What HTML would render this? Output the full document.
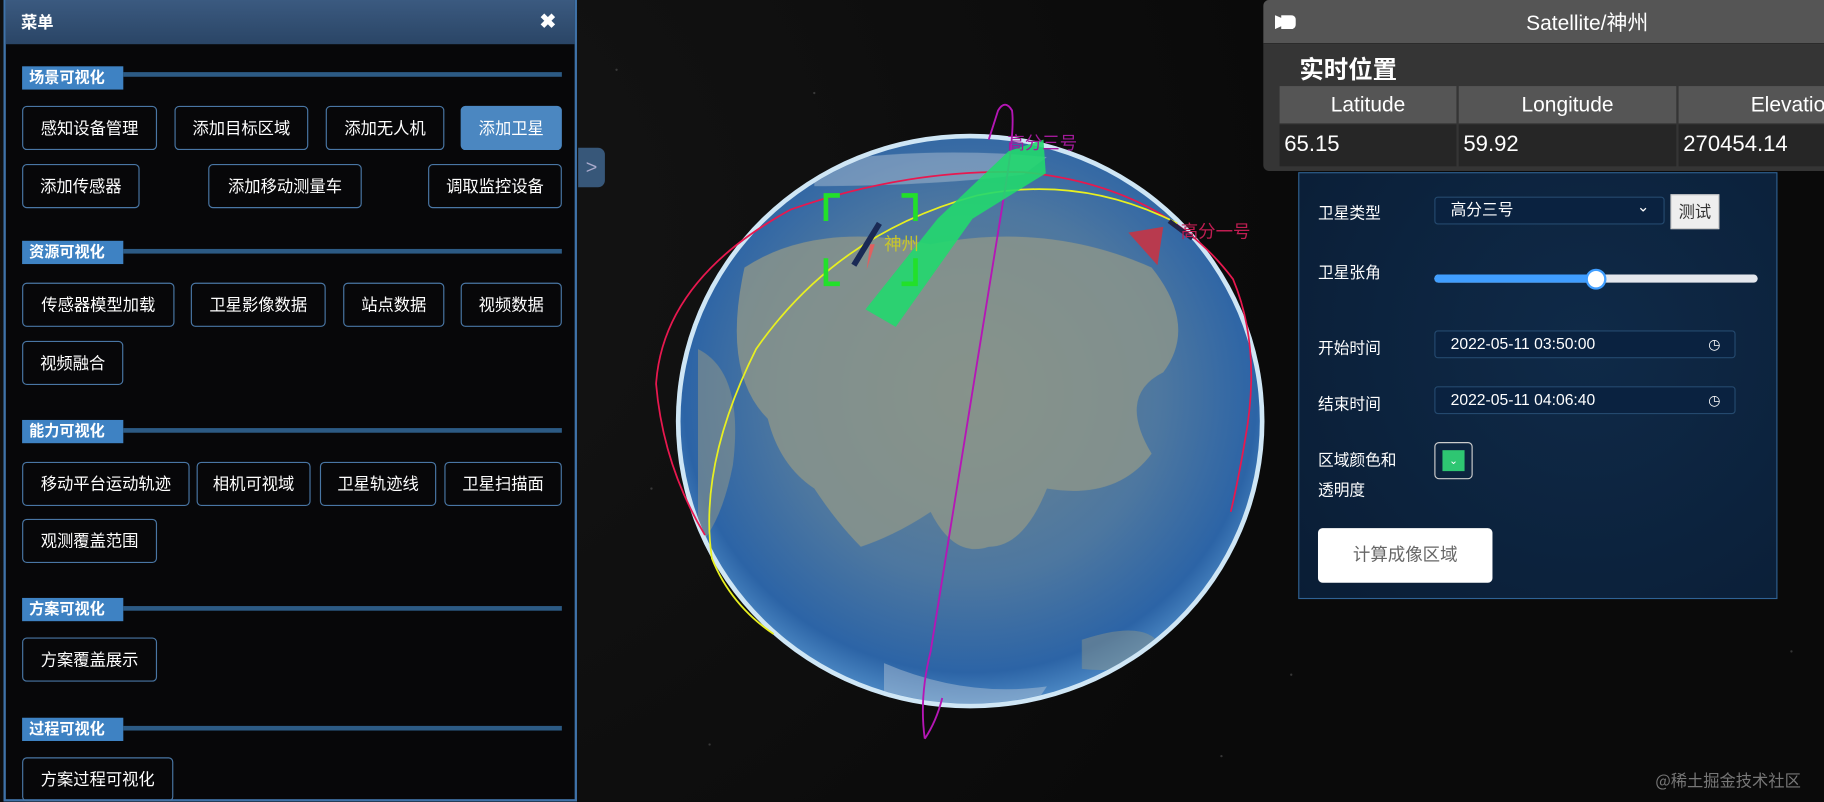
<!DOCTYPE html>
<html><head><meta charset="utf-8"><style>
*{margin:0;padding:0;box-sizing:border-box}
html,body{width:1824px;height:802px;overflow:hidden;background:#0b0b0b}
#s{position:absolute;left:0;top:0;width:1568px;height:689px;transform:scale(1.16327);transform-origin:0 0;font-family:"Liberation Sans","Noto Sans CJK SC",sans-serif;color:#fff;
background:radial-gradient(circle at 20% 30%,#151515 0,#0a0a0a 60%);}
.a{position:absolute}
.menu{left:3px;top:0;width:493px;height:689px;border:2px solid #3f72a8;border-top:none;background:rgba(6,7,9,.92)}
.mh{left:0;top:0;width:489px;height:38px;background:linear-gradient(#3b5a80,#2a4566);font-weight:bold;font-size:14px;line-height:38px;padding-left:13px}
.x{right:16px;top:0;font-size:17px;font-weight:bold}
.sec{position:absolute;left:14px;width:87px;height:20px;background:#3e82c3;font-weight:bold;font-size:13px;line-height:20px;padding-left:6px;letter-spacing:0}
.ln{position:absolute;left:101px;width:377px;height:4px;background:#2c5a84}
.b{position:absolute;height:38px;border:1px solid #4976a4;border-radius:4px;font-size:14px;line-height:36px;text-align:center;color:#fff}
.tab{left:497px;top:127px;width:23px;height:34px;background:#375779;border-radius:0 6px 6px 0;font-size:17px;line-height:34px;text-align:center;color:#aac}
.tp{left:1086px;top:0;width:482px;height:147px;background:#353535;border-radius:5px 0 0 5px;overflow:hidden}
.tph{left:0;top:0;width:482px;height:38px;background:#555;font-size:18px;line-height:40px;text-align:center;padding-left:75px;border-bottom:1px solid #2a2a2a}
.th{position:absolute;top:74px;height:32px;background:#555;font-size:18px;line-height:32px;text-align:center}
.td{position:absolute;top:107px;height:36px;background:#262626;font-size:19px;line-height:36px;padding-left:4px}
.fp{left:1116px;top:148px;width:412px;height:367px;background:radial-gradient(circle at 60% 40%,#0f2a48,#0a1d35);border:1px solid #2f6294}
.lb{position:absolute;left:16px;font-size:13.5px;color:#fff}
.in{position:absolute;left:116px;width:259px;height:24px;border:1px solid #24496e;border-radius:3px;background:#0a2240;font-size:13.5px;line-height:22px;padding-left:13px}
</style></head><body><div id="s">
<svg class="a" style="left:0;top:0" width="1568" height="689">
<defs><radialGradient id="g" cx="50%" cy="45%" r="55%"><stop offset="0" stop-color="#6d8590"/><stop offset=".6" stop-color="#4d77a0"/><stop offset=".9" stop-color="#2c64a6"/><stop offset="1" stop-color="#4a86c2"/></radialGradient>
<clipPath id="c"><ellipse cx="834" cy="362" rx="249" ry="243"/></clipPath></defs>
<g fill="#555" opacity=".6"><circle cx="530" cy="60" r="1"/><circle cx="560" cy="420" r="1"/><circle cx="610" cy="640" r="1"/><circle cx="1110" cy="580" r="1"/><circle cx="1540" cy="560" r="1"/><circle cx="700" cy="80" r="1"/><circle cx="1050" cy="650" r="1"/></g>
<ellipse cx="834" cy="362" rx="253" ry="247" fill="#cfe6f5"/>
<ellipse cx="834" cy="362" rx="249" ry="243" fill="url(#g)"/>
<g clip-path="url(#c)" fill="#8e978a" opacity=".8">
<path d="M640 230 Q700 190 800 210 Q900 190 990 230 Q1030 280 1000 320 Q960 340 990 390 Q960 430 900 420 Q880 470 850 470 Q820 480 800 440 Q770 460 740 470 Q720 450 700 420 Q670 400 660 360 Q620 320 640 230Z"/>
<path d="M600 300 Q640 320 630 400 Q620 450 600 470Z" opacity=".7"/>
<path d="M930 550 Q990 530 1000 560 Q970 580 930 575Z" opacity=".6"/>
<path d="M700 140 Q800 125 900 135 L880 150 Q800 160 700 160Z" fill="#c8d4dc" opacity=".5"/>
<path d="M760 570 Q830 600 900 590 L880 620 Q800 615 760 600Z" fill="#c8d4dc" opacity=".5"/>
</g>
<path d="M606 460 Q570 400 564 330 Q570 240 680 180 Q780 145 880 148 Q1000 160 1060 240 Q1085 300 1070 380 Q1064 415 1058 440" fill="none" stroke="#e8184f" stroke-width="1.5"/>
<path d="M1012 192 Q930 150 840 168 Q720 200 650 300 Q600 400 612 480 Q628 520 665 545" fill="none" stroke="#e8f020" stroke-width="1.5"/>
<path d="M795 635 Q790 600 800 560 L866 150 Q872 110 870 95 Q864 85 858 95 L850 120 M795 635 Q805 620 810 600" fill="none" stroke="#b516b5" stroke-width="1.6"/>
<polygon points="744,266 770,281 836,188 899,149 897,120 867,130 806,188" fill="#22d86e" opacity=".9"/>
<g fill="none" stroke="#22e02a" stroke-width="4"><path d="M722 168H710V190M775 168H787V190M710 222V244H722M787 222V244H775"/></g>
<path d="M734 228L756 192" stroke="#1a2a55" stroke-width="5"/><path d="M748 210L745 232L752 210Z" fill="#e06060"/>
<polygon points="970,200 1000,195 995,228" fill="#b83a4e"/>
<path d="M1005 190L1025 205" stroke="#224" stroke-width="4"/>
<text x="760" y="215" fill="#c8c62a" font-size="15" font-family="Noto Sans CJK SC">神州</text>
<text x="866" y="128" fill="#a21a9a" font-size="15" font-family="Noto Sans CJK SC">高分三号</text>
<text x="1015" y="204" fill="#c01d52" font-size="15" font-family="Noto Sans CJK SC">高分一号</text>
<text x="1423" y="676" fill="#777" font-size="14" font-family="Noto Sans CJK SC">@稀土掘金技术社区</text>
</svg>
<div class="a menu">
<div class="a mh">菜单<span class="a x">✖</span></div>
<div class="sec" style="top:57px">场景可视化</div><div class="ln" style="top:62px"></div>
<div class="b" style="left:14px;top:91px;width:116px">感知设备管理</div>
<div class="b" style="left:145px;top:91px;width:115px">添加目标区域</div>
<div class="b" style="left:275px;top:91px;width:102px">添加无人机</div>
<div class="b" style="left:391px;top:91px;width:87px;background:#4b87c1;border-color:#4b87c1">添加卫星</div>
<div class="b" style="left:14px;top:141px;width:101px">添加传感器</div>
<div class="b" style="left:174px;top:141px;width:132px">添加移动测量车</div>
<div class="b" style="left:363px;top:141px;width:115px">调取监控设备</div>
<div class="sec" style="top:207px">资源可视化</div><div class="ln" style="top:214px"></div>
<div class="b" style="left:14px;top:243px;width:131px">传感器模型加载</div>
<div class="b" style="left:159px;top:243px;width:116px">卫星影像数据</div>
<div class="b" style="left:290px;top:243px;width:87px">站点数据</div>
<div class="b" style="left:391px;top:243px;width:87px">视频数据</div>
<div class="b" style="left:14px;top:293px;width:87px">视频融合</div>
<div class="sec" style="top:361px">能力可视化</div><div class="ln" style="top:368px"></div>
<div class="b" style="left:14px;top:397px;width:144px">移动平台运动轨迹</div>
<div class="b" style="left:164px;top:397px;width:98px">相机可视域</div>
<div class="b" style="left:270px;top:397px;width:100px">卫星轨迹线</div>
<div class="b" style="left:377px;top:397px;width:101px">卫星扫描面</div>
<div class="b" style="left:14px;top:446px;width:116px">观测覆盖范围</div>
<div class="sec" style="top:514px">方案可视化</div><div class="ln" style="top:521px"></div>
<div class="b" style="left:14px;top:548px;width:116px">方案覆盖展示</div>
<div class="sec" style="top:617px">过程可视化</div><div class="ln" style="top:624px"></div>
<div class="b" style="left:14px;top:651px;width:130px">方案过程可视化</div>
</div>
<div class="a tab">&gt;</div>
<div class="a tp">
<div class="a tph">Satellite/神州</div>
<div class="a" style="left:10px;top:13px;width:18px;height:12px;background:#fff;border-radius:0 4px 4px 0;clip-path:polygon(0 0,30% 20%,30% 0,100% 0,100% 100%,30% 100%,30% 80%,0 100%)"></div>
<div class="a" style="left:31px;top:44px;font-size:21px;font-weight:bold">实时位置</div>
<div class="th" style="left:14px;width:152px">Latitude</div>
<div class="th" style="left:168px;width:187px">Longitude</div>
<div class="th" style="left:357px;width:140px;text-align:left;padding-left:62px">Elevation</div>
<div class="td" style="left:14px;width:152px">65.15</div>
<div class="td" style="left:168px;width:187px">59.92</div>
<div class="td" style="left:357px;width:140px">270454.14</div>
</div>
<div class="a fp">
<div class="lb" style="top:23px">卫星类型</div>
<div class="in" style="top:20px;width:198px">高分三号<span style="position:absolute;right:12px;top:-3px;font-size:13px">&#8964;</span></div>
<div class="a" style="left:319px;top:18px;width:42px;height:30px;background:#eee;border:1px solid #ccc;color:#333;font-size:14px;line-height:28px;text-align:center">测试</div>
<div class="lb" style="top:74px">卫星张角</div>
<div class="a" style="left:116px;top:87px;width:278px;height:7px;border-radius:4px;background:#e4e7ed"></div>
<div class="a" style="left:116px;top:87px;width:140px;height:7px;border-radius:4px;background:#409eff"></div>
<div class="a" style="left:246px;top:82px;width:18px;height:18px;border-radius:50%;background:#fff;border:2px solid #409eff"></div>
<div class="lb" style="top:139px">开始时间</div>
<div class="in" style="top:135px">2022-05-11 03:50:00<span style="position:absolute;right:12px;top:0;font-size:12px">&#9719;</span></div>
<div class="lb" style="top:187px">结束时间</div>
<div class="in" style="top:183px">2022-05-11 04:06:40<span style="position:absolute;right:12px;top:0;font-size:12px">&#9719;</span></div>
<div class="lb" style="top:235px">区域颜色和</div>
<div class="lb" style="top:261px">透明度</div>
<div class="a" style="left:116px;top:231px;width:33px;height:32px;border:1px solid #ccc;border-radius:4px"><div style="margin:6px;width:19px;height:18px;background:#2ec672;font-size:9px;text-align:center;line-height:18px">&#8964;</div></div>
<div class="a" style="left:16px;top:305px;width:150px;height:47px;background:#fff;border-radius:4px;color:#666;font-size:15px;line-height:47px;text-align:center">计算成像区域</div>
</div>
</div></body></html>
